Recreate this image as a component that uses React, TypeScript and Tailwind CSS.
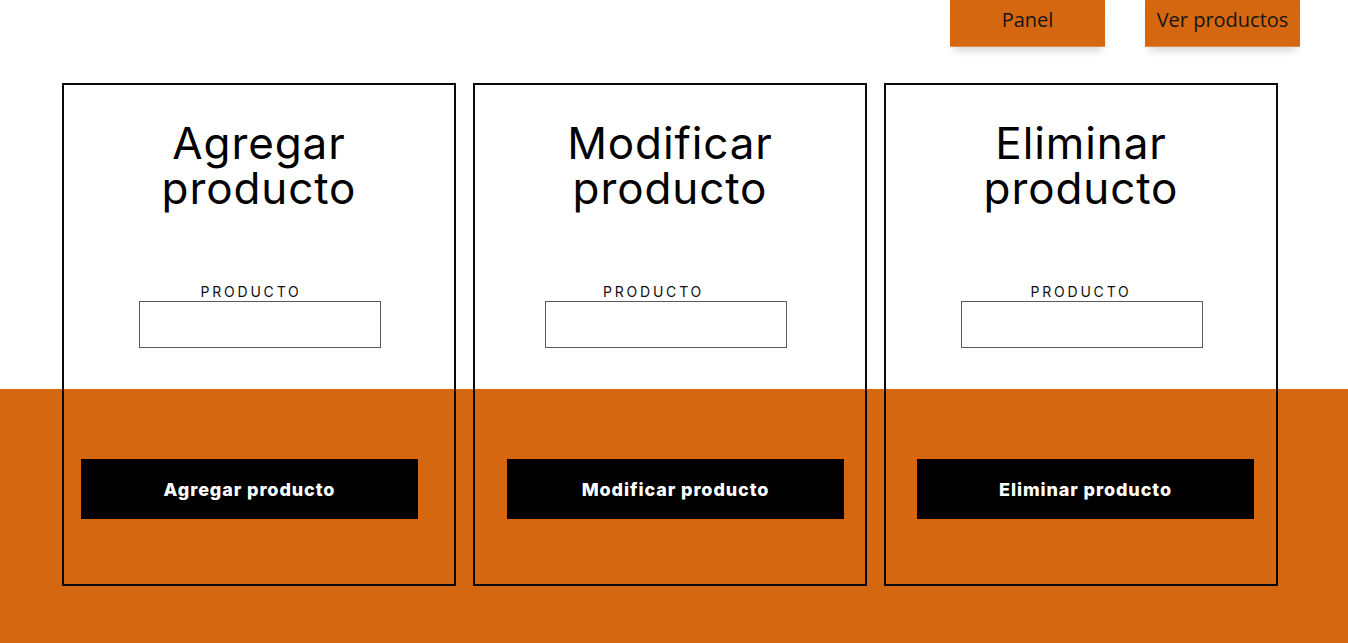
import React from "react";

type Card = {
  title: [string, string];
  button: string;
  labelCls: string;
  inputCls: string;
  btnCls: string;
};

const cards: Card[] = [
  {
    title: ["Agregar", "producto"],
    button: "Agregar producto",
    labelCls: "mr-[16px]",
    inputCls: "ml-[2px]",
    btnCls: "ml-[17px]",
  },
  {
    title: ["Modificar", "producto"],
    button: "Modificar producto",
    labelCls: "mr-[33px]",
    inputCls: "mr-[8px]",
    btnCls: "ml-[32px]",
  },
  {
    title: ["Eliminar", "producto"],
    button: "Eliminar producto",
    labelCls: "ml-[0px]",
    inputCls: "ml-[2px]",
    btnCls: "ml-[31px]",
  },
];

export default function App() {
  return (
    <div className="w-[1348px] h-[643px] overflow-hidden bg-[linear-gradient(to_bottom,#ffffff_389px,#d4670f_389px)]">
      <header className="h-[47px] flex justify-end gap-[40px] pr-[48px]">
        {["Panel", "Ver productos"].map((t) => (
          <button
            key={t}
            className="w-[155px] h-[47px] bg-[#d4670f] border-b border-[#e08a4a] shadow-[0_8px_8px_-4px_rgba(0,0,0,0.16)] text-[20px] leading-[27px] pt-[6px] self-start flex justify-center items-start text-[#151515]"
            style={{ fontFamily: '"Open Sans", sans-serif' }}
          >
            {t}
          </button>
        ))}
      </header>
      <main className="flex gap-[17px] pl-[62px] pt-[36px]">
        {cards.map((c) => (
          <section
            key={c.button}
            className="w-[394px] h-[503px] border-2 border-[#0a0a0a] flex flex-col items-center pt-[36px]"
            style={{ fontFamily: 'Inter, "Noto Sans", sans-serif' }}
          >
            <h1 className="text-[44px] leading-[45px] text-black text-center font-normal tracking-[0.9px]">
              {c.title[0]}
              <br />
              {c.title[1]}
            </h1>
            <label
              className={`mt-[72px] text-[14px] leading-[18px] tracking-[2.8px] text-[#111] ${c.labelCls}`}
            >
              PRODUCTO
            </label>
            <input
              className={`mt-[0px] w-[242px] h-[47px] border border-[#5a5a5a] bg-white ${c.inputCls}`}
            />
            <div className="self-stretch mt-[111px]">
              <button
                className={`w-[337px] h-[60px] bg-black text-white text-[18px] font-extrabold tracking-[0.9px] flex items-center justify-center ${c.btnCls}`}
              >
                {c.button}
              </button>
            </div>
          </section>
        ))}
      </main>
    </div>
  );
}
